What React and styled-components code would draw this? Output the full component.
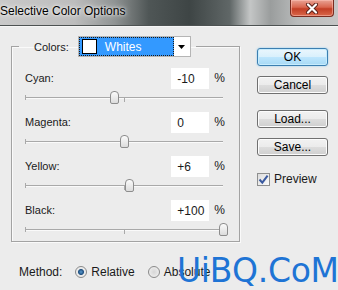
import React from 'react';
import styled, { createGlobalStyle } from 'styled-components';

const GlobalStyle = createGlobalStyle`
    html, body {
        margin: 0;
        padding: 0;
        background: #ececec;
    }
`

const channels = [
    { name: 'Cyan', value: -10, text: '-10' },
    { name: 'Magenta', value: 0, text: '0' },
    { name: 'Yellow', value: 6, text: '+6' },
    { name: 'Black', value: 100, text: '+100' }
]

const TRACK = 198

const CloseGlyph = () => (
    <svg width="14" height="11" viewBox="0 0 14 11">
        <path d="M3 1.5 L11 9.5 M11 1.5 L3 9.5" stroke="#5a2018" strokeWidth="4" strokeLinecap="round" />
        <path d="M3 1.5 L11 9.5 M11 1.5 L3 9.5" stroke="#ffffff" strokeWidth="2.2" strokeLinecap="round" />
    </svg>
)

const CheckMark = () => (
    <svg width="11" height="11" viewBox="0 0 11 11">
        <path d="M1.5 5.5 L4.3 8.6 L9.6 1.6" stroke="#3a5aa0" strokeWidth="2" fill="none" />
    </svg>
)

const Arrow = () => (
    <svg width="8" height="4" viewBox="0 0 8 4">
        <path d="M0 0 H7 L3.5 4 Z" fill="#000" />
    </svg>
)

const Slider = ({ value }) => {
    const left = (value + 100) / 200 * TRACK - 4.5
    return (
        <SliderWrap>
            <Track>
                <TickStart />
                <TickMid />
                <Thumb style={{ left }} />
            </Track>
        </SliderWrap>
    )
}

const App = () => {
    return (
        <Window>
            <GlobalStyle />
            <TitleBar>
                <Title>Selective Color Options</Title>
                <CloseButton><CloseGlyph /></CloseButton>
            </TitleBar>
            <Body>
                <Group>
                    <Legend>
                        <Label>Colors:</Label>
                        <Select>
                            <Selected>
                                <Swatch />
                                <SelectText>Whites</SelectText>
                            </Selected>
                            <ArrowBox><Arrow /></ArrowBox>
                        </Select>
                    </Legend>
                    {channels.map(c => (
                        <Channel key={c.name}>
                            <Header>
                                <Label>{c.name}:</Label>
                                <NumberBox>{c.text}</NumberBox>
                                <Percent>%</Percent>
                            </Header>
                            <Slider value={c.value} />
                        </Channel>
                    ))}
                </Group>
                <Side>
                    <Button primary>OK</Button>
                    <Button gap={10}>Cancel</Button>
                    <Button gap={16}>Load...</Button>
                    <Button gap={10}>Save...</Button>
                    <CheckRow>
                        <CheckBox><CheckMark /></CheckBox>
                        <Label>Preview</Label>
                    </CheckRow>
                </Side>
            </Body>
            <MethodRow>
                <Label>Method:</Label>
                <Radio checked />
                <Label>Relative</Label>
                <Radio />
                <Label>Absolute</Label>
            </MethodRow>
            <Watermark>UiBQ.CoM</Watermark>
        </Window>
    )
}

export default App

const Window = styled.div`
    position: relative;
    width: 338px;
    height: 290px;
    overflow: hidden;
    background: #ececec;
    font-family: "Liberation Sans", Arial, sans-serif;
    font-size: 11px;
    color: #1a1a1a;
`
const TitleBar = styled.div`
    display: flex;
    justify-content: space-between;
    align-items: flex-start;
    height: 25px;
    border-bottom: 1px solid #4d5252;
    box-shadow: 0 1px 0 #f6f6f6;
    background: linear-gradient(90deg, #c9c9c9 0%, #bdbdbd 22%, #8f9393 34%, #4f5656 44%, #3e4545 56%, #606767 68%, #c4c6c6 74%, #9a9d9d 80%, #b9bbbb 88%, #c6c6c6 100%);
`
const Title = styled.div`
    padding: 4px 0 0 0;
    font-size: 12px;
    color: #000;
    text-shadow: 0 0 6px #f4f4f4, 0 0 3px #ffffff;
`
const CloseButton = styled.div`
    display: flex;
    align-items: center;
    justify-content: center;
    width: 42px;
    height: 16px;
    margin-right: 4px;
    border: 1px solid #7a2c20;
    border-top: 0;
    border-radius: 0 0 4px 4px;
    background: linear-gradient(#e9a394 0%, #d9664f 45%, #c23e25 55%, #d9674a 100%);
    box-shadow: inset 0 0 0 1px rgba(255, 200, 190, 0.5);
`
const Body = styled.div`
    display: flex;
    align-items: flex-start;
    padding: 10px 0 0 11px;
`
const Group = styled.fieldset`
    box-sizing: border-box;
    width: 229px;
    height: 206px;
    margin: 0;
    padding: 0 14px 0 13px;
    border: 1px solid #a3a3a3;
    box-shadow: inset 1px 1px 0 #fafafa, 1px 1px 0 #fafafa;
`
const Legend = styled.legend`
    display: flex;
    align-items: center;
    gap: 9px;
    margin-left: -6px;
    padding: 0 5px 0 15px;
`
const Label = styled.span`
    white-space: nowrap;
`
const Select = styled.div`
    display: flex;
    width: 113px;
    height: 21px;
    box-sizing: border-box;
    border: 1px solid #b5b5b5;
    background: #fff;
`
const Selected = styled.div`
    display: flex;
    align-items: center;
    flex: 1;
    gap: 8px;
    padding-left: 3px;
    background: #3399ff;
    outline: 1px dotted #1a1a1a;
    outline-offset: -1px;
`
const Swatch = styled.div`
    width: 13px;
    height: 13px;
    border: 1px solid #000;
    background: #fff;
`
const SelectText = styled.span`
    color: #fff;
    font-size: 12px;
`
const ArrowBox = styled.div`
    display: flex;
    align-items: center;
    justify-content: center;
    width: 16px;
`
const Channel = styled.div`
    display: flex;
    flex-direction: column;
    &:first-of-type {
        margin-top: 10px;
    }
`
const Header = styled.div`
    display: flex;
    align-items: center;
    height: 22px;
`
const NumberBox = styled.div`
    box-sizing: border-box;
    width: 38px;
    height: 21px;
    margin-left: auto;
    padding: 4px 0 0 6px;
    background: #fff;
    font-size: 12px;
`
const Percent = styled.span`
    margin-left: 5px;
    font-size: 12px;
`
const SliderWrap = styled.div`
    height: 22px;
    padding-top: 8px;
    box-sizing: border-box;
`
const Track = styled.div`
    position: relative;
    width: ${TRACK}px;
    height: 0;
    border-top: 1px solid #a9a9a9;
    border-bottom: 1px solid #fafafa;
`
const TickStart = styled.div`
    position: absolute;
    left: 0;
    top: -3px;
    width: 1px;
    height: 5px;
    background: #a9a9a9;
`
const TickMid = styled.div`
    position: absolute;
    left: 99px;
    top: 0;
    width: 1px;
    height: 4px;
    background: #a9a9a9;
`
const Thumb = styled.div`
    position: absolute;
    top: -7px;
    width: 9px;
    height: 13px;
    box-sizing: border-box;
    border: 1px solid #8d8d8d;
    border-radius: 4px 4px 2px 2px;
    background: linear-gradient(#fbfbfb, #dcdcdc);
`
const Side = styled.div`
    display: flex;
    flex-direction: column;
    padding: 12px 0 0 17px;
`
const Button = styled.div`
    display: flex;
    align-items: center;
    justify-content: center;
    box-sizing: border-box;
    width: 71px;
    height: 18px;
    margin-top: ${props => props.gap ? props.gap : 0}px;
    border: 1px solid ${props => props.primary ? '#3c7fb1' : '#707070'};
    border-radius: 3px;
    font-size: 12px;
    color: #000;
    background: ${props => props.primary
        ? 'linear-gradient(#eaf6fd 0%, #d9f0fc 50%, #bee6fd 51%, #a7d9f5 100%)'
        : 'linear-gradient(#f2f2f2 0%, #ebebeb 50%, #dddddd 51%, #cfcfcf 100%)'};
    box-shadow: ${props => props.primary ? '0 0 2px #7fc4ef, inset 0 0 0 1px #c7ecfd' : 'inset 0 0 0 1px #fcfcfc'};
`
const CheckRow = styled.div`
    display: flex;
    align-items: center;
    gap: 4px;
    margin-top: 16px;
    font-size: 12px;
`
const CheckBox = styled.div`
    display: flex;
    align-items: center;
    justify-content: center;
    box-sizing: border-box;
    width: 13px;
    height: 13px;
    border: 1px solid #8e8f8f;
    background: linear-gradient(135deg, #dcdcdc, #fbfbfb);
`
const MethodRow = styled.div`
    display: flex;
    align-items: center;
    gap: 4px;
    height: 16px;
    margin: 22px 0 0 19px;
    font-size: 12px;
`
const Radio = styled.div`
    box-sizing: border-box;
    width: 12px;
    height: 12px;
    margin-left: 9px;
    border: 1px solid #8a8a8a;
    border-radius: 50%;
    background: ${props => props.checked
        ? 'radial-gradient(circle, #5b9bd0 0, #1e4f80 2.5px, #e8e8e8 3.5px, #f6f6f6 100%)'
        : 'radial-gradient(circle, #d6d6d6 0, #f4f4f4 100%)'};
`
const Watermark = styled.div`
    position: absolute;
    left: 177px;
    top: 254px;
    font-family: "DejaVu Sans", Verdana, sans-serif;
    font-size: 33px;
    line-height: 1;
    letter-spacing: -0.3px;
    color: #1e74d5;
    pointer-events: none;
`
